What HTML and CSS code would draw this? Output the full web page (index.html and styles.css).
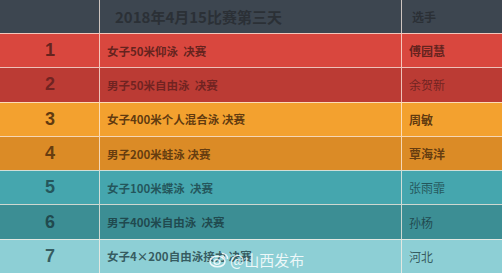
FILE: index.html
```html
<!DOCTYPE html>
<html lang="zh">
<head>
<meta charset="utf-8">
<link rel="stylesheet" href="styles.css">
</head>
<body>
<div class="table">
  <div class="row head">
    <div class="cell num"></div>
    <div class="cell event">2018年4月15比赛第三天</div>
    <div class="cell name">选手</div>
  </div>
  <div class="row r1">
    <div class="cell num">1</div>
    <div class="cell event">女子50米仰泳&nbsp; 决赛</div>
    <div class="cell name">傅园慧</div>
  </div>
  <div class="row r2">
    <div class="cell num">2</div>
    <div class="cell event">男子50米自由泳&nbsp; 决赛</div>
    <div class="cell name">余贺新</div>
  </div>
  <div class="row r3">
    <div class="cell num">3</div>
    <div class="cell event">女子400米个人混合泳 决赛</div>
    <div class="cell name">周敏</div>
  </div>
  <div class="row r4">
    <div class="cell num">4</div>
    <div class="cell event">男子200米蛙泳 决赛</div>
    <div class="cell name">覃海洋</div>
  </div>
  <div class="row r5">
    <div class="cell num">5</div>
    <div class="cell event">女子100米蝶泳&nbsp; 决赛</div>
    <div class="cell name">张雨霏</div>
  </div>
  <div class="row r6">
    <div class="cell num">6</div>
    <div class="cell event">男子400米自由泳&nbsp; 决赛</div>
    <div class="cell name">孙杨</div>
  </div>
  <div class="row r7">
    <div class="cell num">7</div>
    <div class="cell event">女子4×200自由泳接力 决赛</div>
    <div class="cell name">河北</div>
  </div>
</div>
<div class="watermark">
  <svg class="weibo" width="20" height="17" viewBox="0 0 20 17">
    <ellipse cx="8.5" cy="10.5" rx="7.5" ry="5.3" fill="none" stroke="rgba(255,255,255,0.85)" stroke-width="1.6"/>
    <ellipse cx="8" cy="11" rx="3" ry="2.3" fill="none" stroke="rgba(255,255,255,0.85)" stroke-width="1.3"/>
    <path d="M13 2.5 A5 5 0 0 1 18.5 8" fill="none" stroke="rgba(255,255,255,0.85)" stroke-width="1.5"/>
    <path d="M13.2 5.2 A2.4 2.4 0 0 1 15.9 7.8" fill="none" stroke="rgba(255,255,255,0.85)" stroke-width="1.3"/>
  </svg>
  <span>@山西发布</span>
</div>
</body>
</html>
```
FILE: styles.css
```css
html, body {
  margin: 0;
  padding: 0;
  background: #3d4650;
  overflow: hidden;
}
body {
  width: 502px;
  height: 273px;
  position: relative;
  font-family: "Noto Sans CJK SC", "Liberation Sans", sans-serif;
}
.table {
  display: flex;
  flex-direction: column;
}
.row {
  display: grid;
  grid-template-columns: 99px 302px 101px;
  height: 34.3px;
  border-top: 1px solid rgba(255, 240, 230, 0.75);
  box-sizing: border-box;
  align-items: stretch;
  color: rgba(40, 28, 28, 0.72);
}
.row.head {
  height: 33px;
  border-top: none;
  background: #3d4650;
  color: #2b3036;
}
.cell {
  display: flex;
  align-items: center;
  box-sizing: border-box;
}
.cell + .cell {
  border-left: 1px solid rgba(255, 240, 230, 0.75);
}
.num {
  justify-content: center;
  font-family: "Liberation Sans", sans-serif;
  font-weight: bold;
  font-size: 18px;
  padding-left: 1px;
}
.event {
  padding-left: 7px;
  font-size: 11.5px;
  font-weight: bold;
}
.name {
  padding-left: 7px;
  font-size: 12px;
  font-weight: bold;
}
.head .event {
  font-size: 15px;
  padding-left: 15px;
  font-weight: bold;
}
.head .name {
  font-size: 12px;
  padding-left: 10px;
}
.r1 { background: #d9473e; color: rgba(70, 25, 22, 0.8); }
.r2 { background: #bb3b34; color: rgba(80, 25, 25, 0.7); }
.r3 { background: #f3a12f; color: rgba(70, 40, 10, 0.85); }
.r4 { background: #db8b26; color: rgba(70, 40, 10, 0.8); }
.r5 { background: #45a6ae; color: rgba(25, 60, 65, 0.75); }
.r6 { background: #3c8e94; color: rgba(25, 55, 60, 0.8); }
.r7 { background: #8dcfd5; color: rgba(30, 60, 65, 0.8); }
.r5 .name, .r6 .name, .r7 .name, .r2 .name { font-weight: normal; }
.watermark {
  position: absolute;
  left: 209px;
  top: 249px;
  display: flex;
  align-items: center;
  gap: 1px;
  color: rgba(255, 255, 255, 0.85);
  font-size: 15px;
  font-family: "Noto Sans CJK SC", sans-serif;
}
.weibo {
  display: block;
}
```
